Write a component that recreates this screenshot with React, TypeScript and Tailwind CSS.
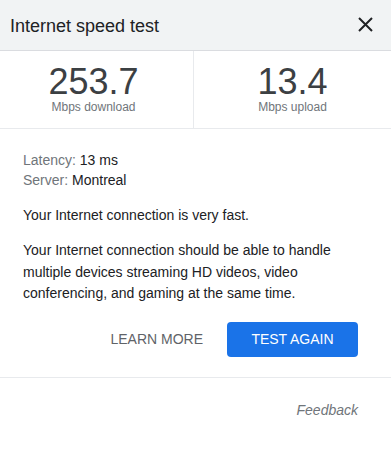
function StatBox({ value, label, className }: { value: string; label: string; className?: string }) {
	return (
		<div className={`flex flex-col items-center pt-[13px] ${className ?? ""}`}>
			<div className="text-[36px] leading-[36px] text-[#3c4043]">{value}</div>
			<div className="text-[12px] leading-[14px] text-[#70757a]">{label}</div>
		</div>
	);
}

export default function App() {
	return (
		<div className="w-[391px] h-[469px] bg-white font-['Liberation_Sans',Arial,sans-serif]">
			<div className="h-[51px] bg-[#f1f3f4] border-b border-[#dadce0] flex items-center justify-between pl-[10px] pr-[18px]">
				<h1 className="text-[18px] leading-[24px] text-[#202124] pt-[1px]">Internet speed test</h1>
				<svg width="15" height="15" viewBox="0 0 15 15" className="text-[#202124] -mt-[1px]">
					<path d="M1 1L14 14M14 1L1 14" stroke="currentColor" strokeWidth="2" />
				</svg>
			</div>

			<div className="flex h-[78px] border-b border-[#e8eaed]">
				<StatBox value="253.7" label="Mbps download" className="w-[194px] border-r border-[#e8eaed] pr-[6px]" />
				<StatBox value="13.4" label="Mbps upload" className="flex-1" />
			</div>

			<div className="pl-[23px] pr-[33px] pt-[21px] text-[14px] text-[#202124]">
				<div className="leading-[20px]">
					<div>
						<span className="text-[#70757a]">Latency:</span> 13 ms
					</div>
					<div>
						<span className="text-[#70757a]">Server:</span> Montreal
					</div>
				</div>
				<p className="leading-[22px] mt-[14px]">Your Internet connection is very fast.</p>
				<p className="leading-[21.7px] mt-[14px]">
					Your Internet connection should be able to handle multiple devices streaming HD videos, video
					conferencing, and gaming at the same time.
				</p>
				<div className="flex justify-end items-center gap-[24px] mt-[17px]">
					<button className="text-[14px] text-[#5f6368] uppercase">Learn more</button>
					<button className="w-[131px] h-[35px] rounded-[4px] bg-[#1a73e8] text-white text-[14px] uppercase">
						Test again
					</button>
				</div>
			</div>

			<div className="border-b border-[#e8eaed] mt-[20px]" />

			<div className="flex justify-end pr-[33px] pt-[22px]">
				<span className="text-[14px] leading-[20px] italic text-[#70757a]">Feedback</span>
			</div>
		</div>
	);
}
